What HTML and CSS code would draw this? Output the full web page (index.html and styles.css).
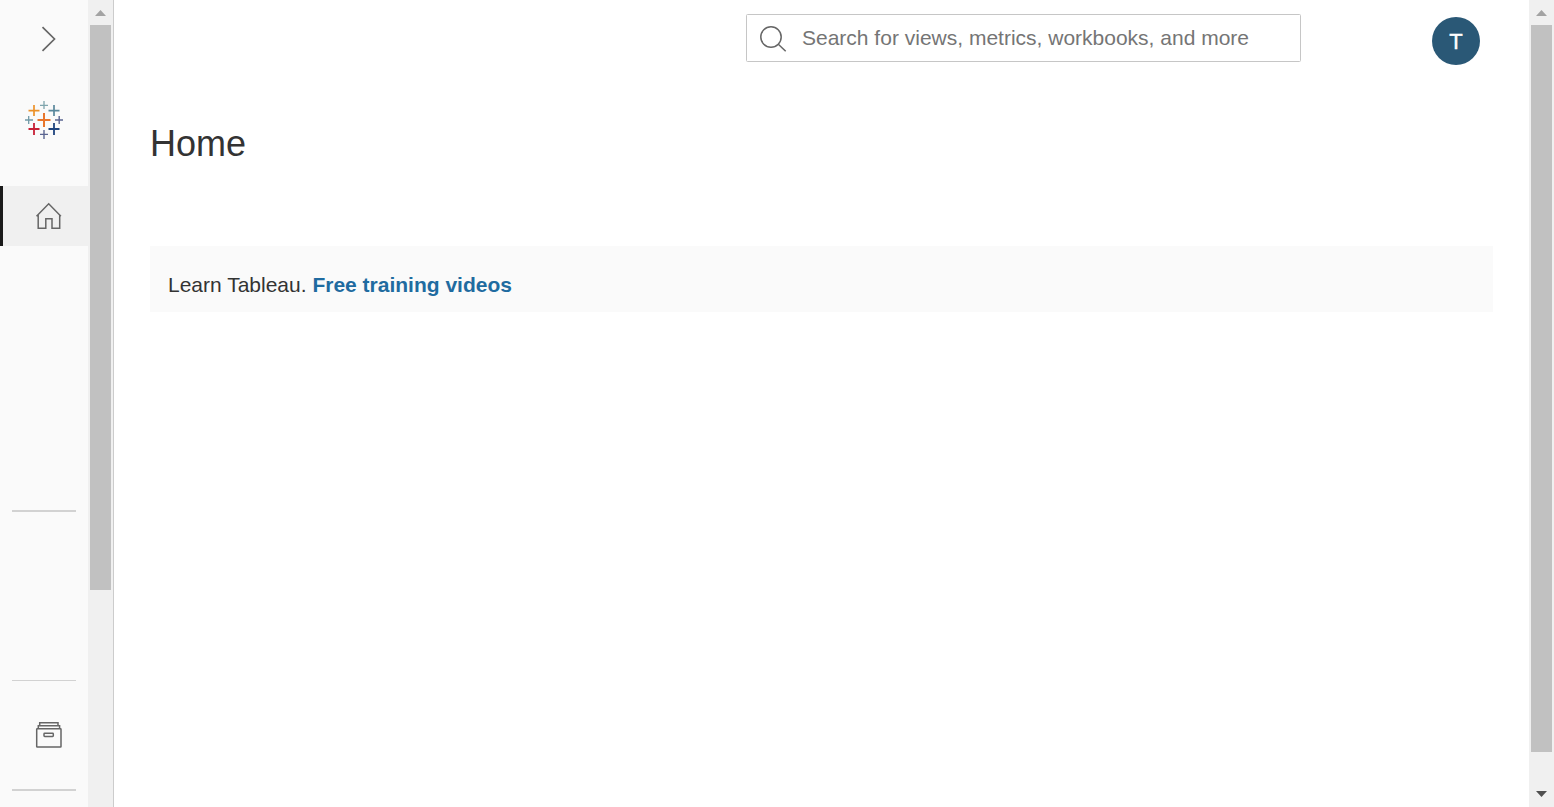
FILE: index.html
```
<!DOCTYPE html>
<html lang="en">
<head>
<meta charset="utf-8">
<title>Home</title>
<link rel="stylesheet" href="styles.css">
</head>
<body>
<div class="app">
  <nav class="sidebar">
    <a class="expand"><svg width="88" height="78" viewBox="0 0 88 78"><path d="M42.500 27.200 54.500 39 42.500 50.800" fill="none" stroke="#666" stroke-width="1.700"/></svg></a>
    <a class="logo">
      <svg width="88" height="60" viewBox="0 90 88 60" fill="none">
        <path d="M44 113v14M37.500 120h13" stroke="#e8762d" stroke-width="2"/>
        <path d="M34 105v11M28.500 110.700h11" stroke="#eb9129" stroke-width="1.700"/>
        <path d="M54 105v11M48.500 110.700h11" stroke="#59879b" stroke-width="1.700"/>
        <path d="M34 123v12M28.500 129h11" stroke="#c72035" stroke-width="1.800"/>
        <path d="M54 123v12M48.500 129h11" stroke="#1f447e" stroke-width="1.800"/>
        <path d="M44 101v8M40 105.300h8" stroke="#7fa5ad" stroke-width="1.300"/>
        <path d="M28.700 116v8M25 120h8" stroke="#7099a6" stroke-width="1.300"/>
        <path d="M59.200 116v8M55 120h8" stroke="#5b6591" stroke-width="1.400"/>
        <path d="M44 130v9M40 134.400h8" stroke="#5b6591" stroke-width="1.400"/>
      </svg>
    </a>
    <a class="nav-home"><svg width="88" height="60" viewBox="0 186 88 60" fill="none" stroke="#666" stroke-width="1.500"><path d="M36.500 216.200 48.700 203.800 60.900 216.200M38.200 214.500v13.700h7.600v-9.500h6.200v9.500h7.700v-13.700"/></svg></a>
    <hr class="rule rule-first">
    <hr class="rule rule-second">
    <a class="nav-archive"><svg width="88" height="108" viewBox="0 681 88 108" fill="none" stroke="#666" stroke-width="1.500"><rect x="36.700" y="728.700" width="24.300" height="18.300" rx=".5"/><path d="M38.300 728.500v-2.800h21.300v2.800M39.700 725.500v-2.800h18.300v2.800"/><rect x="44" y="733.200" width="9.300" height="3.300" rx=".7"/></svg></a>
    <hr class="rule rule-third">
  </nav>
  <div class="scrollbar">
    <svg class="arrow" width="25" height="25"><path d="M7 16 12.500 10 18 16Z" fill="#a3a3a3"/></svg>
    <div class="thumb thumb-side"></div>
  </div>
  <main class="main">
    <header class="header">
      <div class="search">
        <svg width="55" height="46" viewBox="747 15 55 46" fill="none" stroke="#666" stroke-width="1.500"><circle cx="771" cy="37" r="10.200"/><path d="m778.300 44.200 7.400 7"/></svg>
        <span>Search for views, metrics, workbooks, and more</span>
      </div>
      <div class="avatar">T</div>
    </header>
    <h1 class="title">Home</h1>
    <section class="banner">Learn Tableau. <a class="link">Free training videos</a></section>
  </main>
  <div class="scrollbar">
    <svg class="arrow" width="25" height="25"><path d="M7 16 12.500 10 18 16Z" fill="#a3a3a3"/></svg>
    <div class="thumb thumb-page"></div>
    <svg class="arrow arrow-down" width="25" height="25"><path d="M7 9H18L12.500 15Z" fill="#505050"/></svg>
  </div>
</div>
</body>
</html>
```
FILE: styles.css
```
* { box-sizing: border-box; }
body { margin: 0; background: #fff; color: #333; font-family: "Liberation Sans", Arial, sans-serif; }
svg { display: block; flex: none; }
.app { display: flex; height: 807px; overflow: hidden; }
.sidebar { display: flex; flex-direction: column; flex: none; width: 88px; background: #fafafa; }
.logo { margin-top: 12px; }
.nav-home { height: 60px; margin-top: 36px; background: linear-gradient(to right, #1a1a1a 3px, #f0f0f0 3px); }
.rule { flex: none; width: 64px; height: 2px; margin: 0 12px; border: 0; background: #d2d2d2; }
.rule-first { margin-top: 264px; }
.rule-second { height: 1px; margin-top: 168px; }
.scrollbar { display: flex; flex-direction: column; align-items: center; flex: none; width: 25px; background: #f0f0f0; }
.arrow { flex: none; }
.arrow-down { margin-top: auto; }
.thumb { width: 21px; background: #c1c1c1; }
.thumb-side { height: 565px; }
.thumb-page { height: 727px; }
.main { flex: 1; min-width: 0; padding: 14px 36px 0; border-left: 1px solid #ccc; }
.header { display: flex; justify-content: flex-end; align-items: flex-start; height: 92px; padding-right: 13px; }
.search { display: flex; align-items: center; width: 555px; height: 48px; border: 1px solid #c6c6c6; border-radius: 1.500px; color: #757575; font-size: 21px; white-space: nowrap; }
.avatar { width: 48px; height: 48px; margin: 3px 0 0 131px; border-radius: 50%; background: #2a5876; color: #fff; font-size: 22px; line-height: 49px; text-align: center; -webkit-text-stroke: .4px #fff; }
.title { margin: 15px 0 0; font-size: 36px; font-weight: 400; line-height: 45px; }
.banner { height: 66px; margin-top: 80px; padding: 26px 18px 0; background: #fafafa; font-size: 21px; line-height: 26px; }
.link { color: #1f6ba0; font-weight: 700; }
```
